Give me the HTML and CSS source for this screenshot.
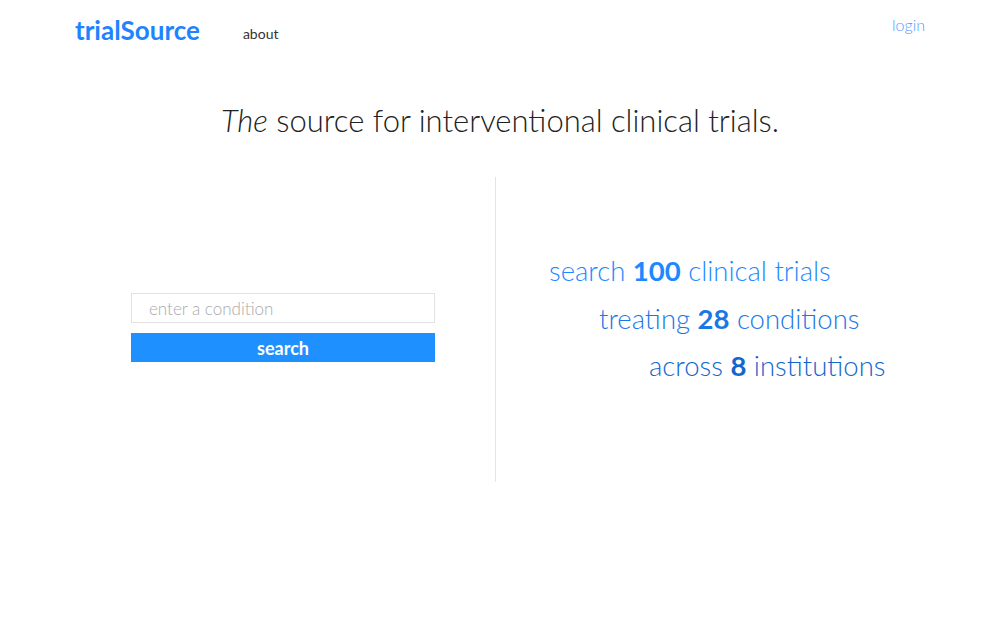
FILE: index.html
```html
<!DOCTYPE html>
<html>
<head>
<meta charset="utf-8">
<link rel="stylesheet" href="styles.css">
</head>
<body>
<header class="topbar">
  <div class="nav-left">
    <a class="logo" href="#">trialSource</a>
    <a class="nav-link" href="#">about</a>
  </div>
  <a class="login" href="#">login</a>
</header>
<h1 class="tagline"><em>The</em> source for interventional clinical trials.</h1>
<main class="split">
  <section class="search-col">
    <form class="search-form">
      <input class="search-input" type="text" placeholder="enter a condition">
      <button class="search-btn" type="button">search</button>
    </form>
  </section>
  <section class="stats-col">
    <p class="stat stat-1">search <b>100</b> clinical trials</p>
    <p class="stat stat-2">treating <b>28</b> conditions</p>
    <p class="stat stat-3">across <b>8</b> institutions</p>
  </section>
</main>
</body>
</html>
```

FILE: styles.css
```css
* { box-sizing: border-box; }
html, body { margin: 0; padding: 0; background: #fff; }
body {
  font-family: Lato, "Open Sans", sans-serif;
  color: #222;
  width: 1000px;
  height: 625px;
  overflow: hidden;
}
a { text-decoration: none; }
.topbar {
  display: flex;
  justify-content: space-between;
  align-items: flex-start;
  padding: 14px 75px 0 75px;
  height: 60px;
}
.nav-left { display: flex; align-items: center; }
.logo {
  font-size: 26px;
  font-weight: 700;
  color: #1e83ff;
}
.nav-link {
  margin-left: 43px;
  margin-top: 6px;
  font-size: 14px;
  color: #333;
}
.login {
  font-size: 16px;
  font-weight: 300;
  color: #4f9bff;
  margin-top: 1px;
}
.tagline {
  margin: 41px 0 0 0;
  text-align: center;
  font-weight: 300;
  font-size: 31px;
  color: #222;
}
.tagline em { font-style: italic; }
.split {
  display: flex;
  margin-top: 38px;
  height: 305px;
}
.search-col {
  width: 495px;
  display: flex;
  align-items: center;
  padding-left: 131px;
}
.search-form {
  width: 304px;
  display: flex;
  flex-direction: column;
  gap: 10px;
  margin-top: -4px;
}
.search-input {
  height: 30px;
  border: 1px solid #e2e2e2;
  padding: 0 17px;
  font-family: Lato, sans-serif;
  font-size: 17px;
  font-weight: 300;
  outline: none;
}
.search-input::placeholder { color: #aaa; }
.search-btn {
  height: 29px;
  border: none;
  background: #1e90ff;
  color: #fff;
  font-family: Lato, sans-serif;
  font-size: 18px;
  font-weight: 700;
  padding: 0;
}
.stats-col {
  flex: 1;
  border-left: 1px solid #e4e4e4;
  display: flex;
  flex-direction: column;
  justify-content: center;
  padding-left: 53px;
  padding-bottom: 22px;
}
.stat {
  margin: 0;
  font-size: 27.5px;
  font-weight: 300;
  line-height: 47.5px;
}
.stat b { font-weight: 700; }
.stat-1 { color: #1e88ff; }
.stat-2 { color: #1a78e6; margin-left: 50px; }
.stat-3 { color: #1566cc; margin-left: 100px; }
```
